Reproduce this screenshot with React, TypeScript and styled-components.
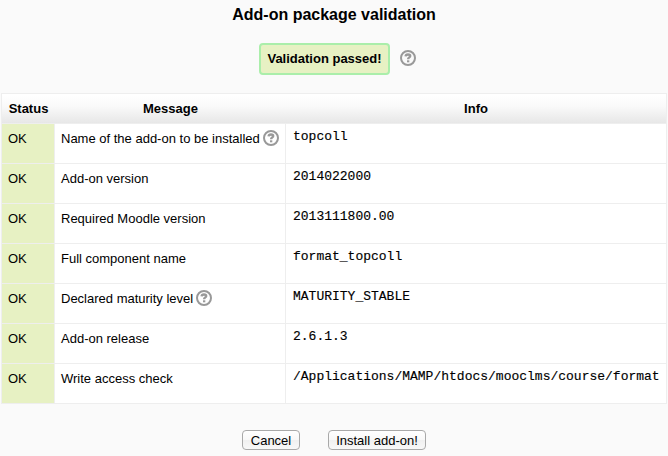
import React from "react";
import styled, { createGlobalStyle } from "styled-components";

const GlobalStyle = createGlobalStyle`
  * { box-sizing: border-box; }
  body {
    margin: 0;
    background: #fafafa;
    color: #000;
    font: 13px/20px "Liberation Sans", Arial, sans-serif;
  }
`;

const Page = styled.main`
  display: flex;
  flex-direction: column;
  width: 668px;
  height: 456px;
  overflow: hidden;
`;

const Title = styled.h1`
  margin: 5px 0 0;
  font-size: 16px;
  line-height: 20px;
  font-weight: bold;
  text-align: center;
`;

const Outcome = styled.div`
  display: flex;
  align-items: flex-start;
  gap: 10px;
  height: 32px;
  margin: 18px 0 18px 259px;
`;

const Passed = styled.strong`
  width: 131px;
  height: 32px;
  border: 2px solid #aaeeaa;
  border-radius: 4px;
  background: #e7f1c3;
  line-height: 28px;
  text-align: center;
  white-space: nowrap;
`;

const HelpSvg = styled.svg`
  flex: none;
  display: block;
  width: 16px;
  height: 16px;
  margin-top: 7px;
`;

const Table = styled.div`
  width: 666px;
  margin-left: 1px;
  border: solid #eee;
  border-width: 1px 0 0 1px;
  background: #fff;
`;

const Row = styled.div<{ $head?: boolean }>`
  display: grid;
  grid-template-columns: 53px 231px 381px;
  height: ${(p) => (p.$head ? 30 : 40)}px;
  background: ${(p) => (p.$head ? "linear-gradient(#fff 5%, #fafafa 40%, #e6e6e6)" : "#fff")};
`;

const HeadCell = styled.div<{ $last?: boolean }>`
  border-bottom: 1px solid #eee;
  border-right: ${(p) => (p.$last ? "1px solid #eee" : "0")};
  font-weight: bold;
  line-height: 29px;
  text-align: center;
`;

const Cell = styled.div<{ $ok?: boolean }>`
  display: flex;
  align-items: flex-start;
  gap: 3px;
  padding: 5px 6px 0;
  border: solid #eee;
  border-width: 0 1px 1px 0;
  background: ${(p) => (p.$ok ? "#e7f1c3" : "#fff")};
  white-space: nowrap;

  ${HelpSvg} { margin-top: 1px; }
`;

const Code = styled.code`
  margin: -2px 0 0 1px;
  font: 13px/20px "Liberation Mono", "Courier New", monospace;
  -webkit-text-stroke: 0.15px #000;
`;

const Actions = styled.div`
  display: flex;
  gap: 28px;
  margin: 26px 0 0 242px;
`;

const Button = styled.button<{ $width: number }>`
  width: ${(p) => p.$width}px;
  height: 20px;
  padding: 0;
  border: 1px solid #a9a9a9;
  border-radius: 4px;
  background: linear-gradient(#fff, #f8f8f8 50%, #f0f0f0 51%, #f8f8f8);
  color: #000;
  font: 13px/17px "Liberation Sans", Arial, sans-serif;
  white-space: nowrap;
`;

const HelpIcon = () => (
  <HelpSvg viewBox="0 0 16 16" fill="none" aria-label="Help">
    <circle cx="8" cy="8" r="7" stroke="#999" strokeWidth="2" />
    <path d="M5.6 6.4C5.7 5 6.6 4.5 8 4.5C9.5 4.5 10.2 5.1 10.2 6.1C10.2 7.5 8.1 7.3 8.1 9.3" stroke="#999" strokeWidth="2.4" />
    <rect x="7" y="10.3" width="2.3" height="2" fill="#999" />
  </HelpSvg>
);

const checks = [
  { message: "Name of the add-on to be installed", info: "topcoll", help: true },
  { message: "Add-on version", info: "2014022000" },
  { message: "Required Moodle version", info: "2013111800.00" },
  { message: "Full component name", info: "format_topcoll" },
  { message: "Declared maturity level", info: "MATURITY_STABLE", help: true },
  { message: "Add-on release", info: "2.6.1.3" },
  { message: "Write access check", info: "/Applications/MAMP/htdocs/mooclms/course/format" },
];

export default function App() {
  return (
    <Page>
      <GlobalStyle />
      <Title>Add-on package validation</Title>
      <Outcome>
        <Passed>Validation passed!</Passed>
        <HelpIcon />
      </Outcome>
      <Table role="table">
        <Row role="row" $head>
          <HeadCell role="columnheader">Status</HeadCell>
          <HeadCell role="columnheader">Message</HeadCell>
          <HeadCell role="columnheader" $last>Info</HeadCell>
        </Row>
        {checks.map((check) => (
          <Row role="row" key={check.message}>
            <Cell role="cell" $ok>OK</Cell>
            <Cell role="cell">
              <span>{check.message}</span>
              {check.help && <HelpIcon />}
            </Cell>
            <Cell role="cell"><Code>{check.info}</Code></Cell>
          </Row>
        ))}
      </Table>
      <Actions>
        <Button $width={58}>Cancel</Button>
        <Button $width={98}>Install add-on!</Button>
      </Actions>
    </Page>
  );
}
